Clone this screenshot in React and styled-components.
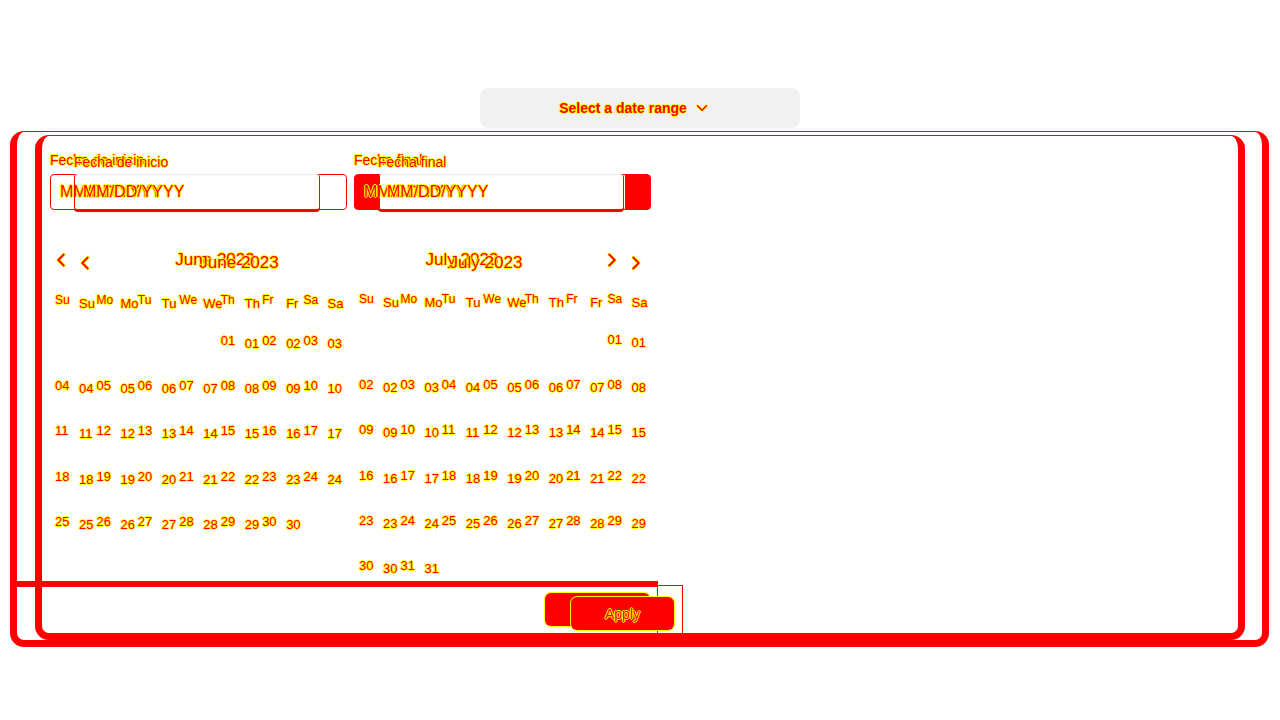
import React from 'react';
import styled, { createGlobalStyle, css } from 'styled-components';

const RED = '#ff0000';
const YEL = '#ffff00';

const GlobalStyle = createGlobalStyle`
  body {
    margin: 0;
    background: #ffffff;
    font-family: "Liberation Sans", Arial, sans-serif;
  }
`;

// red letters with a yellow rim
const ink = css`
  color: ${RED};
  text-shadow: 1px 0 0 ${YEL}, -1px 0 0 ${YEL}, 0 1px 0 ${YEL}, 0 -1px 0 ${YEL};
`;

// the two passes of the picker, drawn one over the other
const sheets = {
  a: {
    left: 10, top: 0, width: 1259, col: 641,
    padTop: 20, padLeft: 33, labelLh: 16, labelGap: 6,
    inputW: 297, inputH: 36, inputGap: 7, inputPad: 9, looks: ['outline', 'edged'],
    monthsTop: 35, dayFs: 12, datesTop: 14,
    footTop: 0, footBorder: 6, footPadTop: 6, footPadBottom: 14, footPadRight: 7, btnW: 105,
  },
  b: {
    left: 35, top: 4, width: 1210, col: 641,
    padTop: 18, padLeft: 32, labelLh: 17, labelGap: 3,
    inputW: 246, inputH: 38, inputGap: 58, inputPad: 8, looks: ['underlined', 'underlined'],
    monthsTop: 36, dayFs: 13, datesTop: 14,
    footTop: 1, footBorder: 1, footPadTop: 11, footPadBottom: 3, footPadRight: 8, btnW: 103,
  },
};

const months = [
  { name: 'June 2023', offset: 4, days: 30 },
  { name: 'July 2023', offset: 6, days: 31 },
];

const weekDays = ['Su', 'Mo', 'Tu', 'We', 'Th', 'Fr', 'Sa'];

const Chevron = ({ dir, size = 22 }) => {
  const d = {
    left: 'm15 18-6-6 6-6',
    right: 'm9 18 6-6-6-6',
    down: 'm6 9 6 6 6-6',
  }[dir];
  return (
    <svg width={size} height={size} viewBox="0 0 24 24" fill="none" strokeLinecap="round" strokeLinejoin="round">
      <path d={d} stroke={YEL} strokeWidth="3.6" />
      <path d={d} stroke={RED} strokeWidth="2" />
    </svg>
  );
};

const Page = styled.div`
  padding-top: 88px;
`;

const Trigger = styled.button`
  display: flex;
  align-items: center;
  justify-content: center;
  gap: 6px;
  width: 320px;
  height: 40px;
  margin: 0 auto;
  padding: 0 10px 0 0;
  border: none;
  border-radius: 8px;
  background: #f2f2f2;
  font-family: inherit;
  font-size: 14px;
  font-weight: 700;
  ${ink}

  svg {
    width: 18px;
    height: 18px;
  }
`;

const Popover = styled.div`
  position: relative;
  margin-top: 3px;
`;

const Frame = styled.div`
  box-sizing: border-box;
  display: flex;
  align-items: flex-start;
  width: ${p => p.$v.width}px;
  margin-left: ${p => p.$v.left}px;
  border: 7px solid ${RED};
  border-top-width: 1px;
  border-radius: 14px;

  ${p => p.$over && css`
    position: absolute;
    top: ${p.$v.top}px;
    left: 0;
    pointer-events: none;
  `}
`;

const Column = styled.div`
  display: flex;
  flex-direction: column;
  width: ${p => p.$w}px;
`;

const Body = styled.div`
  padding: ${p => p.$v.padTop}px 0 0 ${p => p.$v.padLeft}px;
`;

const Fields = styled.div`
  display: flex;
  gap: ${p => p.$gap}px;
`;

const Field = styled.div`
  display: flex;
  flex-direction: column;
`;

const Label = styled.span`
  font-size: 14px;
  line-height: ${p => p.$v.labelLh}px;
  margin-bottom: ${p => p.$v.labelGap}px;
  ${ink}
`;

const DateInput = styled.div`
  box-sizing: border-box;
  display: flex;
  align-items: center;
  width: ${p => p.$v.inputW}px;
  height: ${p => p.$v.inputH}px;
  padding-left: ${p => p.$v.inputPad}px;
  border-radius: 4px;
  font-size: 16px;
  ${ink}

  ${p => p.$look === 'outline' && css`
    border: 1px solid ${RED};
  `}
  ${p => p.$look === 'edged' && css`
    border: 1px solid ${RED};
    background: linear-gradient(to right, ${RED} 25px, transparent 25px, transparent calc(100% - 25px), ${RED} calc(100% - 25px));
  `}
  ${p => p.$look === 'underlined' && css`
    border: 1px solid ${RED};
    border-top-color: #eeeeee;
    border-bottom-width: 3px;
  `}
`;

const Months = styled.div`
  display: flex;
  gap: 14px;
  margin-top: ${p => p.$top}px;
  height: 336px;
`;

const Month = styled.div`
  width: 290px;
  display: flex;
  flex-direction: column;
`;

const MonthHead = styled.div`
  display: flex;
  align-items: center;
  height: 30px;
`;

const NavSlot = styled.div`
  display: flex;
  align-items: center;
  width: ${p => p.$w}px;
  padding-left: ${p => p.$pad || 0}px;
  box-sizing: border-box;
`;

const Title = styled.div`
  flex: 1;
  text-align: center;
  font-size: 17px;
  ${ink}
`;

const DayRow = styled.div`
  display: grid;
  grid-template-columns: repeat(7, 1fr);
  height: 24px;
  margin-top: 13px;
  align-items: center;
`;

const DayName = styled.span`
  padding-left: 5px;
  font-size: ${p => p.$fs}px;
  ${ink}
`;

const DateGrid = styled.div`
  display: grid;
  grid-template-columns: repeat(7, 1fr);
  grid-auto-rows: 30px;
  row-gap: 15.2px;
  margin-top: ${p => p.$top}px;
`;

const DateCell = styled.span`
  padding-left: 5px;
  line-height: 30px;
  font-size: 13px;
  ${ink}
`;

const Footer = styled.div`
  display: flex;
  justify-content: flex-end;
  margin-top: ${p => p.$v.footTop}px;
  padding: ${p => p.$v.footPadTop}px ${p => p.$v.footPadRight}px ${p => p.$v.footPadBottom}px 0;
  border-top: ${p => p.$v.footBorder}px solid ${RED};
  border-right: 1px solid ${RED};
`;

const ApplyButton = styled.button`
  width: ${p => p.$w}px;
  height: 33px;
  border: none;
  border-radius: 6px;
  background: ${RED};
  box-shadow: 0 0 0 1px ${YEL};
  font-family: inherit;
  font-size: 14px;
  ${ink}
`;

const Sheet = ({ v, over }) => (
  <Frame $v={v} $over={over}>
    <Column $w={v.col}>
      <Body $v={v}>
        <Fields $gap={v.inputGap}>
          <Field>
            <Label $v={v}>Fecha de inicio</Label>
            <DateInput $v={v} $look={v.looks[0]}>MM/DD/YYYY</DateInput>
          </Field>
          <Field>
            <Label $v={v}>Fecha final</Label>
            <DateInput $v={v} $look={v.looks[1]}>MM/DD/YYYY</DateInput>
          </Field>
        </Fields>

        <Months $top={v.monthsTop}>
          {months.map((m, i) => (
            <Month key={m.name}>
              <MonthHead>
                {i === 0 && (
                  <NavSlot $w={40}>
                    <Chevron dir="left" />
                  </NavSlot>
                )}
                <Title>{m.name}</Title>
                {i === 1 && (
                  <NavSlot $w={74} $pad={31}>
                    <Chevron dir="right" />
                  </NavSlot>
                )}
              </MonthHead>

              <DayRow>
                {weekDays.map(d => (
                  <DayName key={d} $fs={v.dayFs}>{d}</DayName>
                ))}
              </DayRow>

              <DateGrid $top={v.datesTop}>
                {Array.from({ length: m.offset }).map((_, k) => (
                  <span key={'e' + k} />
                ))}
                {Array.from({ length: m.days }).map((_, k) => (
                  <DateCell key={k}>{String(k + 1).padStart(2, '0')}</DateCell>
                ))}
              </DateGrid>
            </Month>
          ))}
        </Months>
      </Body>

      <Footer $v={v}>
        <ApplyButton $w={v.btnW}>Apply</ApplyButton>
      </Footer>
    </Column>
  </Frame>
);

export default function App() {
  return (
    <Page>
      <GlobalStyle />
      <Trigger>
        Select a date range
        <Chevron dir="down" />
      </Trigger>
      <Popover>
        <Sheet v={sheets.a} />
        <Sheet v={sheets.b} over />
      </Popover>
    </Page>
  );
}
